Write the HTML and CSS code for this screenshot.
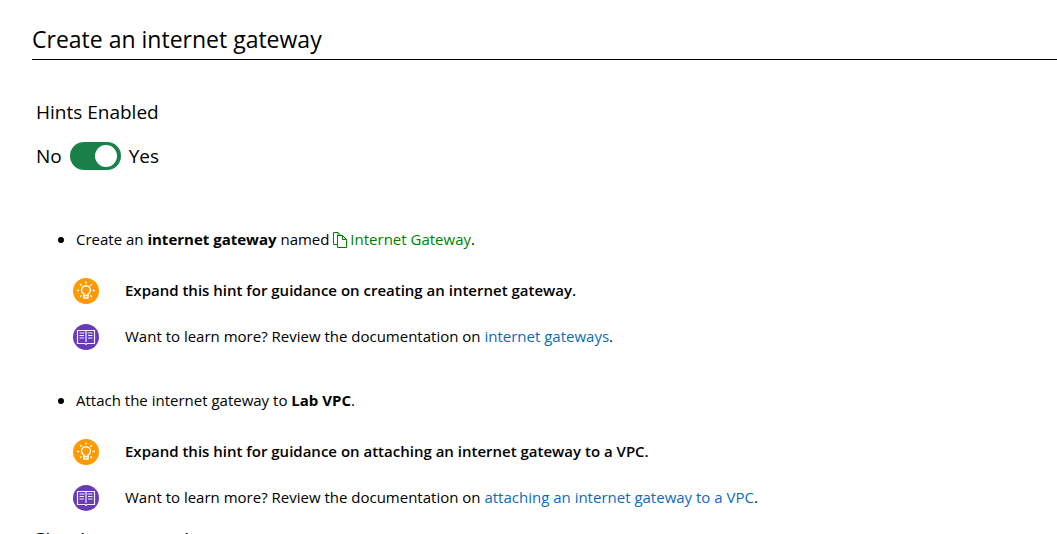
FILE: index.html
```html
<!DOCTYPE html>
<html lang="en">
<head>
<meta charset="utf-8">
<meta name="viewport" content="width=device-width, initial-scale=1">
<title>Create an internet gateway</title>
<link rel="stylesheet" href="styles.css">
</head>
<body>
<svg class="sprite" aria-hidden="true">
  <symbol id="bulb" viewBox="0 0 26 26">
    <circle cx="13" cy="13" r="13" fill="#ff9900"/>
    <g fill="none" stroke="#fff" stroke-width="1.4" stroke-linecap="round">
      <path d="M11 17.500v-1.500C9.500 15 8.500 13.800 8.500 12.200a4.500 4.500 0 0 1 9 0c0 1.600-1 2.800-2.500 3.800v1.500z"/>
      <path d="M11 17.500v2.500h4v-2.500"/>
      <path d="M13 4v1.200M7.500 6.500l.7.700M18.500 6.500l-.7.700M4.500 12.500h1.200M20.300 12.500h1.200M7.500 18.500l.7-.7M18.500 18.500l-.7-.7"/>
    </g>
  </symbol>
  <symbol id="book" viewBox="0 0 26 26">
    <circle cx="13" cy="13" r="13" fill="#673ab7"/>
    <g fill="none" stroke="#f3ecff" stroke-width="1.2">
      <path d="M4.500 6.500H21.500V19.500H14l-1 1-1-1H4.500z"/>
      <path d="M13 7v11M6.500 9H11.500M6.500 11.500H11M6.500 14H11M14.500 9h5M15 11.500h4.500M15 14h4.500"/>
    </g>
  </symbol>
</svg>
<main class="page">
  <h2 class="heading">Create an internet gateway</h2>
  <section class="hints">
    <div class="hints-title">Hints Enabled</div>
    <label class="toggle">
      <span>No</span>
      <input class="switch" type="checkbox" role="switch" aria-label="Hints Enabled" checked>
      <span>Yes</span>
    </label>
  </section>
  <ul class="tasks">
    <li class="task">
      <p class="step">Create an <strong>internet gateway</strong> named <button class="copy" type="button"><svg class="copy-icon" viewBox="0 0 14 16" aria-hidden="true"><path d="M4 12.500H.5V.5H5l3 3M5 .5v3M4.500 3.500h5l4 4v8h-9zM9.500 3.500v4h4"/></svg>Internet Gateway</button>.</p>
      <details class="note hint">
        <summary class="row"><svg class="icon" aria-hidden="true"><use href="#bulb"/></svg><span class="text">Expand this hint for guidance on creating an internet gateway.</span></summary>
      </details>
      <div class="note row"><svg class="icon" aria-hidden="true"><use href="#book"/></svg><span class="text">Want to learn more? Review the documentation on <a class="link" href="#">internet gateways</a>.</span></div>
    </li>
    <li class="task">
      <p class="step">Attach the internet gateway to <strong>Lab VPC</strong>.</p>
      <details class="note hint">
        <summary class="row"><svg class="icon" aria-hidden="true"><use href="#bulb"/></svg><span class="text">Expand this hint for guidance on attaching an internet gateway to a VPC.</span></summary>
      </details>
      <div class="note row"><svg class="icon" aria-hidden="true"><use href="#book"/></svg><span class="text">Want to learn more? Review the documentation on <a class="link" href="#">attaching an internet gateway to a VPC</a>.</span></div>
    </li>
  </ul>
  <h3 class="subheading">Check your work</h3>
</main>
</body>
</html>
```
FILE: styles.css
```css
* {
  box-sizing: border-box;
}

html {
  height: 100%;
  overflow: hidden;
}

body {
  height: 100%;
  margin: 0;
  overflow: hidden;
  background: #fff;
  color: #000;
  font: 15px/24px "Segoe UI", "Open Sans", "Noto Sans", sans-serif;
}

.sprite {
  display: none;
}

.page {
  padding: 21px 0 0 32px;
}

.heading {
  margin: 0;
  padding-bottom: 2px;
  border-bottom: 1px solid #000;
  font-size: 23px;
  font-weight: 400;
  line-height: 36px;
}

.subheading {
  margin: 0;
  font-size: 21px;
  font-weight: 400;
  line-height: 36px;
}

.hints {
  padding: 38px 4px 0;
  font-size: 19px;
  line-height: 28px;
}

.toggle {
  display: inline-flex;
  align-items: center;
  gap: 8px;
  margin-top: 16px;
}

.switch {
  appearance: none;
  display: flex;
  justify-content: flex-end;
  width: 51px;
  height: 28px;
  margin: 0;
  padding: 3px 4px;
  border-radius: 14px;
  background: #198049;
}

.switch::before {
  content: "";
  width: 22px;
  height: 22px;
  border-radius: 50%;
  background: #fff;
}

.switch:not(:checked) {
  justify-content: flex-start;
  background: #777;
}

.tasks {
  display: grid;
  gap: 38px;
  margin: 57px 0 12px;
  padding: 0 0 0 44px;
}

.task::marker {
  font-size: 16px;
}

.step {
  margin: 0 0 27px;
}

.copy {
  padding: 0;
  border: 0;
  background: none;
  color: #008000;
  font: inherit;
}

.copy-icon {
  width: 14px;
  height: 16px;
  margin-right: 3px;
  vertical-align: -3px;
  fill: none;
  stroke: #008000;
}

.note {
  margin: 20px 0 0 -3px;
}

.row {
  display: flex;
  align-items: center;
  gap: 26px;
  list-style: none;
}

.text {
  padding-bottom: 2px;
}

.hint {
  font-weight: 600;
}

.icon {
  flex: none;
  width: 26px;
  height: 26px;
}

.link {
  color: #0b6cbd;
  text-decoration: none;
}
```
